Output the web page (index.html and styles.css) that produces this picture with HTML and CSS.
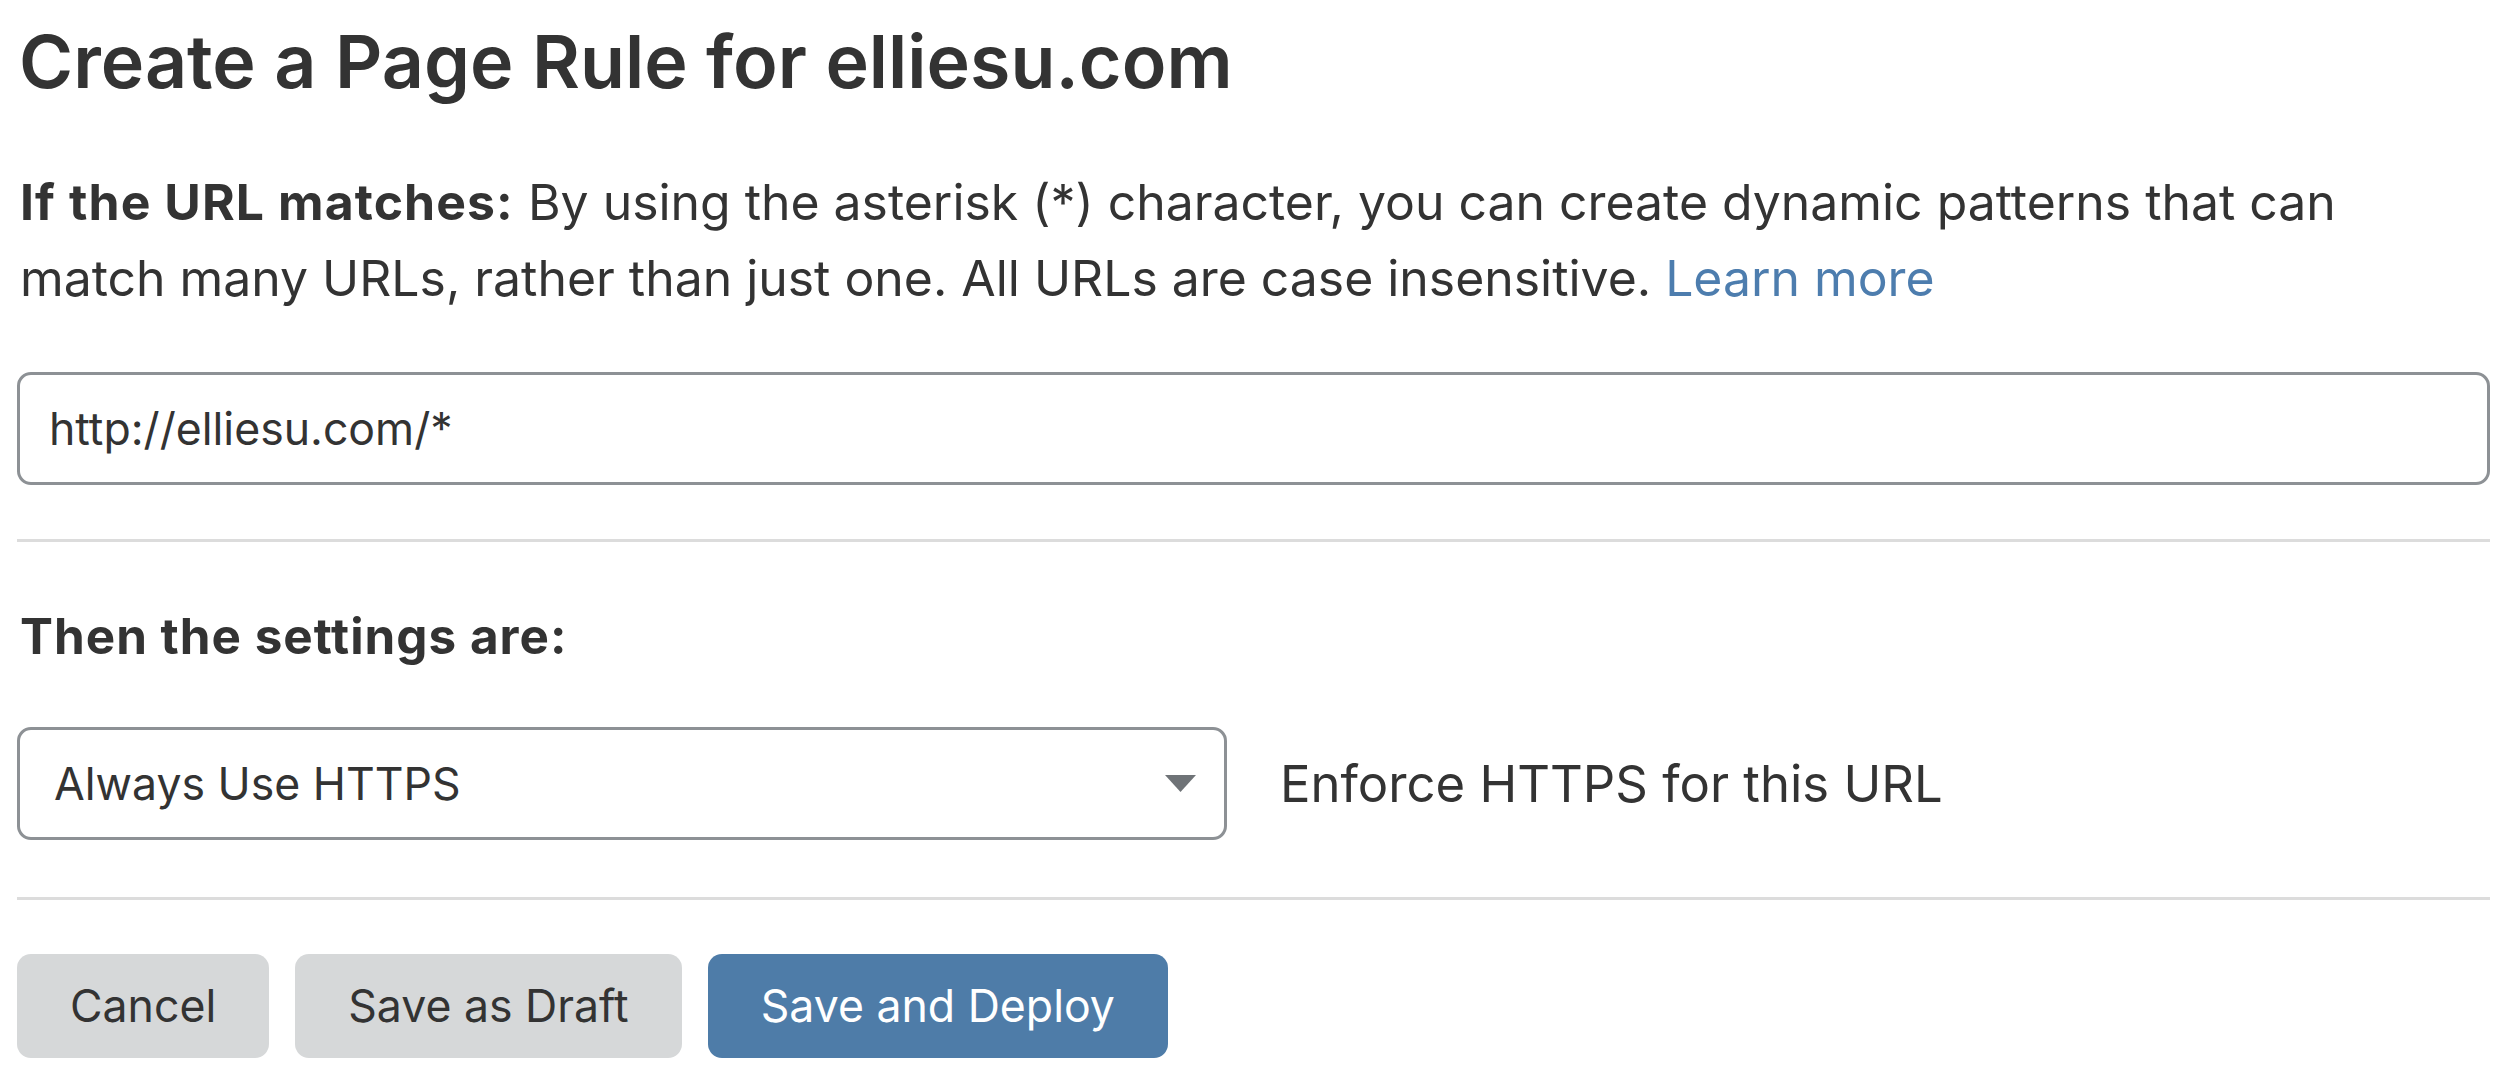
FILE: index.html
```html
<!DOCTYPE html>
<html lang="en">
<head>
<meta charset="utf-8">
<title>Create a Page Rule</title>
<link rel="stylesheet" href="styles.css">
</head>
<body>
<main class="page">
  <h1 class="title">Create a Page Rule for elliesu.com</h1>
  <p class="intro"><strong>If the URL matches:</strong> By using the asterisk (*) character, you can create dynamic patterns that can match many URLs, rather than just one. All URLs are case insensitive. <a class="link" href="#">Learn more</a></p>
  <input class="url-input" type="text" value="http://elliesu.com/*">
  <hr class="divider">
  <h2 class="subhead">Then the settings are:</h2>
  <div class="setting-row">
    <div class="select">
      <span class="select-value">Always Use HTTPS</span>
      <svg class="caret" width="31" height="17" viewBox="0 0 31 17"><polygon points="0,0 31,0 15.5,17" fill="#6f7377"/></svg>
    </div>
    <span class="setting-desc">Enforce HTTPS for this URL</span>
  </div>
  <hr class="divider divider-lower">
  <div class="actions">
    <button class="btn btn-cancel">Cancel</button>
    <button class="btn btn-draft">Save as Draft</button>
    <button class="btn btn-primary">Save and Deploy</button>
  </div>
</main>
</body>
</html>
```

FILE: styles.css
```css
html, body {
  margin: 0;
  padding: 0;
  background: #ffffff;
}
body {
  font-family: Inter, "Noto Sans", sans-serif;
  color: #333333;
}
.page {
  width: 2473px;
  padding: 13px 0 0 17px;
  display: flex;
  flex-direction: column;
  align-items: flex-start;
}
.title {
  margin: 2px 0 0 2px;
  font-size: 73.5px;
  font-weight: 600;
  line-height: 93px;
  color: #333333;
}
.intro {
  margin: 56px 0 0 3px;
  width: 2400px;
  font-size: 49.9px;
  line-height: 76px;
  font-weight: 400;
}
.intro strong {
  font-weight: 700;
  letter-spacing: 1.1px;
}
.link {
  color: #4d7dae;
  text-decoration: none;
}
.url-input {
  box-sizing: border-box;
  margin: 56px 0 0 0;
  width: 2473px;
  height: 113px;
  border: 3px solid #8d9195;
  border-radius: 14px;
  padding: 0 0 0 29px;
  font-family: Inter, "Noto Sans", sans-serif;
  font-size: 44.6px;
  color: #333333;
  background: #fff;
  outline: none;
}
.divider {
  margin: 54px 0 0 0;
  width: 2473px;
  height: 3px;
  border: 0;
  background: #dcdcdc;
}
.divider-lower {
  margin-top: 57px;
}
.subhead {
  margin: 56px 0 0 3px;
  font-size: 49.4px;
  line-height: 76px;
  font-weight: 700;
  letter-spacing: 1px;
}
.setting-row {
  margin-top: 53px;
  display: flex;
  align-items: center;
  gap: 53px;
}
.select {
  box-sizing: border-box;
  width: 1210px;
  height: 113px;
  border: 3px solid #8d9195;
  border-radius: 14px;
  padding: 0 28px 0 34px;
  display: flex;
  align-items: center;
  justify-content: space-between;
}
.select-value {
  font-size: 44.6px;
  color: #333333;
}
.caret {
  display: block;
}
.setting-desc {
  font-size: 50.8px;
  color: #333333;
}
.actions {
  margin-top: 54px;
  display: flex;
  gap: 26px;
}
.btn {
  height: 104px;
  border: 0;
  border-radius: 14px;
  font-family: Inter, "Noto Sans", sans-serif;
  font-size: 44.6px;
  padding: 0 53px;
  color: #333333;
  background: #d6d8d9;
}
.btn-primary {
  background: #4e7ca8;
  color: #ffffff;
}
```
